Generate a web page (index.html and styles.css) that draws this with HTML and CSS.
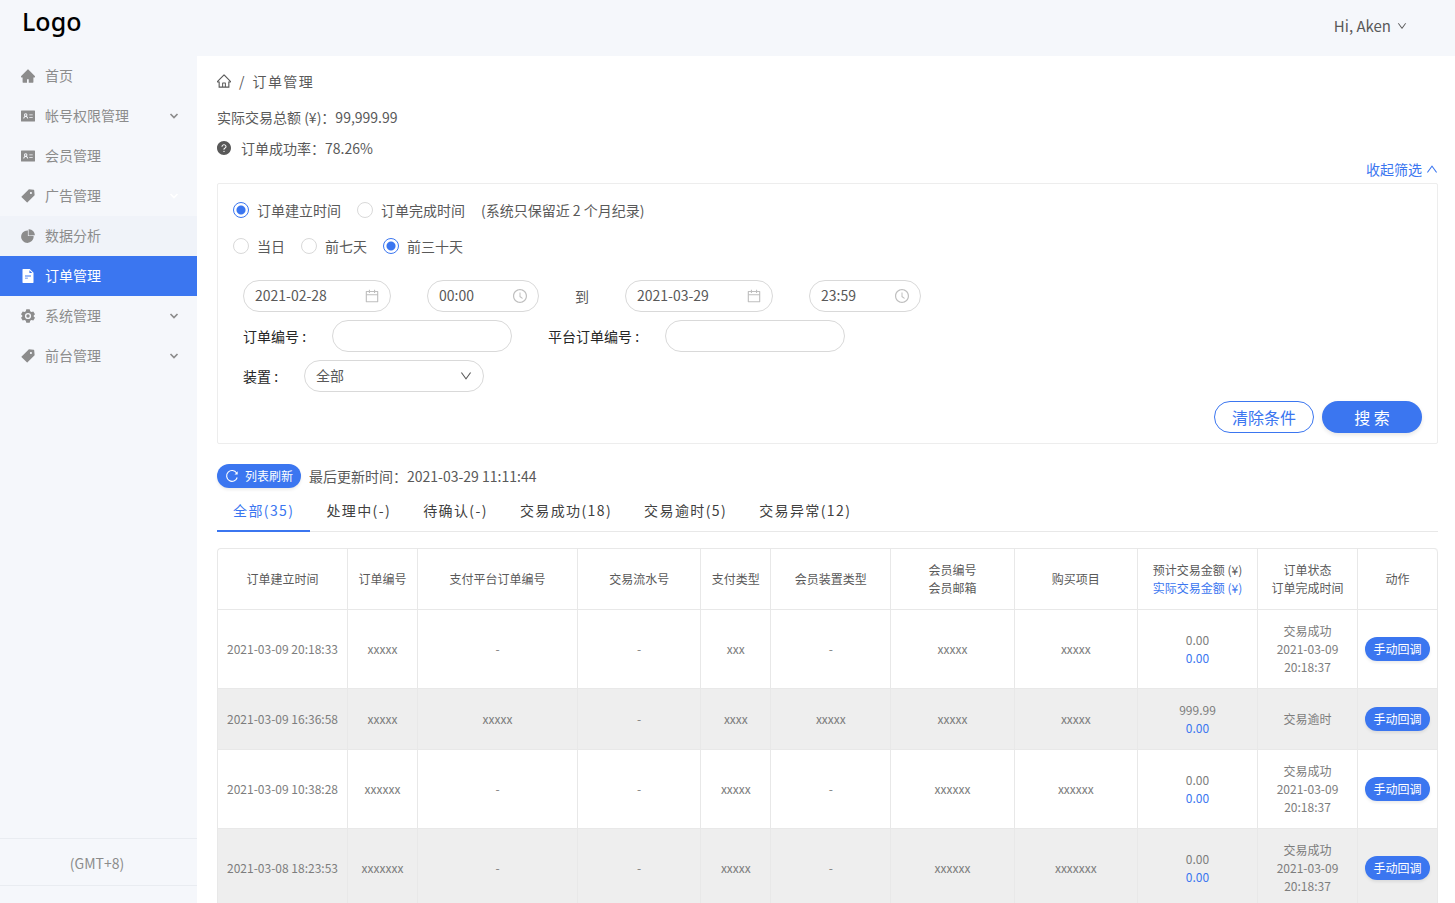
FILE: index.html
```html
<!DOCTYPE html>
<html lang="zh-CN">
<head>
<meta charset="utf-8">
<meta name="viewport" content="width=device-width, initial-scale=1">
<title>订单管理</title>
<link rel="stylesheet" href="styles.css">
</head>
<body>
<svg class="sprite" aria-hidden="true">
  <symbol id="home-fill" viewBox="64 64 896 896"><path d="M946.5 505L534.6 93.4a31.93 31.93 0 00-45.2 0L77.5 505c-12 12-18.8 28.3-18.8 45.3 0 35.3 28.7 64 64 64h43.4V908c0 17.7 14.3 32 32 32H448V716h112v224h265.9c17.7 0 32-14.3 32-32V614.3h43.4c17 0 33.3-6.7 45.3-18.8 24.9-25 24.9-65.5-.1-90.5z"/></symbol>
  <symbol id="home" viewBox="64 64 896 896"><path d="M946.5 505L560.1 118.8l-25.9-25.9a31.5 31.5 0 00-44.4 0L77.5 505a63.9 63.9 0 00-18.8 46c.4 35.2 29.7 63.3 64.9 63.3h42.5V940h691.8V614.3h43.4c17.1 0 33.2-6.7 45.3-18.8a63.6 63.6 0 0018.7-45.3c0-17-6.7-33.1-18.8-45.2zM568 868H456V664h112v204zm217.9-325.7V868H632V640c0-22.1-17.9-40-40-40H432c-22.1 0-40 17.9-40 40v228H238.1V542.3h-96l370-369.7 23.1 23.1L882 542.3h-96.1z"/></symbol>
  <symbol id="idcard" viewBox="0 0 14 14"><path fill-rule="evenodd" d="M0.5 1.5h13q.5 0 .5.5v10q0 .5-.5.5h-13Q0 12.500 0 12V2q0-.5.5-.5zM4.700 4.300a1.700 1.700 0 0 0-1.200 2.900C2.700 7.700 2.300 8.600 2.200 9.600h1c.1-1.100.7-1.700 1.500-1.700s1.400.6 1.500 1.700h1c-.1-1-.5-1.900-1.300-2.400a1.700 1.700 0 0 0-1.200-2.900zM4.700 5.200a.8.800 0 1 1 0 1.600.8.800 0 0 1 0-1.600zM8.300 5.400v.9h3.400v-.9zM8.300 7.900v.9h3.400v-.9z"/></symbol>
  <symbol id="tag" viewBox="64 64 896 896"><path d="M938 458.8l-29.6-312.6c-1.5-16.2-14.4-29-30.6-30.6L565.2 86h-.4c-3.2 0-5.7 1-7.6 2.9L88.900 557.200a9.960 9.960 0 000 14.100l363.800 363.800c1.900 1.900 4.400 2.900 7.100 2.900s5.200-1 7.100-2.900l468.300-468.300c2-2.100 3-5 2.800-8zM699 387c-35.300 0-64-28.700-64-64s28.700-64 64-64 64 28.700 64 64-28.700 64-64 64z"/></symbol>
  <symbol id="pie" viewBox="64 64 896 896"><path d="M863.1 518.5H505.5V160.9c0-4.4-3.6-8-8-8h-26a398.57 398.57 0 00-282.5 117 397.47 397.47 0 00-85.600 127C82.600 446.200 72 498.500 72 552.500S82.600 658.700 103.400 708c20.100 47.500 48.900 90.300 85.600 127 36.700 36.700 79.400 65.500 127 85.600a396.640 396.640 0 00155.600 31.500 398.570 398.570 0 00282.500-117c36.700-36.700 65.500-79.400 85.600-127a396.640 396.640 0 0031.500-155.600v-26c-.1-4.400-3.700-8-8.100-8zM951 463l-2.600-28.200c-8.500-92-49.300-178.800-115.100-244.300A398.500 398.500 0 00588.400 75.600L560.100 73c-4.700-.4-8.700 3.200-8.700 7.900v383.700c0 4.400 3.600 8 8 8l383.600-1c4.700-.1 8.400-4 8-8.600z"/></symbol>
  <symbol id="file" viewBox="64 64 896 896"><path fill-rule="evenodd" d="M854.6 288.7c6 6 9.4 14.1 9.4 22.6V928c0 17.7-14.3 32-32 32H192c-17.7 0-32-14.3-32-32V96c0-17.7 14.3-32 32-32h424.7c8.5 0 16.7 3.4 22.7 9.400l215.200 215.300zM790.200 326L602 137.800V326h188.200zM320 482v56h384v-56zM320 618v56h184v-56z"/></symbol>
  <symbol id="gear" viewBox="0 0 14 14"><path fill-rule="evenodd" d="M5.300.3h3.400l.5 1.900 1.200.7 1.900-.5L14 5.300l-1.300 1.100v1.200L14 8.700l-1.700 2.900-1.900-.5-1.200.7-.5 1.900H5.300l-.5-1.900-1.200-.7-1.900.5L0 8.700l1.300-1.100V6.400L0 5.300l1.700-2.900 1.900.5 1.200-.7zM7 3.900a3.100 3.100 0 1 0 0 6.200 3.100 3.100 0 0 0 0-6.200z"/><circle cx="7" cy="7" r="1.700"/></symbol>
  <symbol id="question" viewBox="64 64 896 896"><path d="M512 64C264.6 64 64 264.6 64 512s200.6 448 448 448 448-200.6 448-448S759.4 64 512 64zm0 708c-22.1 0-40-17.9-40-40s17.9-40 40-40 40 17.9 40 40-17.9 40-40 40zm62.9-219.5a48.3 48.3 0 00-30.9 44.8V620c0 4.4-3.6 8-8 8h-48c-4.4 0-8-3.6-8-8v-21.5c0-23.1 6.7-45.9 19.9-64.9 12.9-18.6 30.9-32.8 52.1-40.9 34-13.1 56-41.6 56-72.7 0-44.1-43.1-80-96-80s-96 35.9-96 80v7.6c0 4.4-3.6 8-8 8h-48c-4.400 0-8-3.600-8-8V420c0-39.300 17.200-76 48.400-103.300C430.400 290.400 470 276 512 276s81.600 14.500 111.600 40.700C654.800 344 672 380.700 672 420c0 57.800-38.100 109.800-97.100 132.500z" stroke="currentColor" stroke-width="0"/></symbol>
  <symbol id="calendar" viewBox="64 64 896 896"><path d="M880 184H712v-64c0-4.4-3.6-8-8-8h-56c-4.4 0-8 3.6-8 8v64H384v-64c0-4.4-3.6-8-8-8h-56c-4.4 0-8 3.6-8 8v64H144c-17.7 0-32 14.3-32 32v664c0 17.7 14.3 32 32 32h736c17.7 0 32-14.3 32-32V216c0-17.7-14.3-32-32-32zm-40 656H184V460h656v380zM184 392V256h128v48c0 4.4 3.6 8 8 8h56c4.4 0 8-3.6 8-8v-48h256v48c0 4.4 3.6 8 8 8h56c4.4 0 8-3.6 8-8v-48h128v136H184z"/></symbol>
  <symbol id="clock" viewBox="64 64 896 896"><path d="M512 64C264.6 64 64 264.6 64 512s200.6 448 448 448 448-200.6 448-448S759.4 64 512 64zm0 820c-205.4 0-372-166.6-372-372s166.6-372 372-372 372 166.6 372 372-166.6 372-372 372z"/><path d="M686.7 638.6L544.1 535.5V288c0-4.4-3.6-8-8-8H488c-4.4 0-8 3.6-8 8v275.4c0 2.6 1.2 5 3.3 6.5l165.4 120.6c3.6 2.6 8.6 1.8 11.2-1.7l28.6-39c2.6-3.7 1.8-8.7-1.8-11.2z"/></symbol>
  <symbol id="down" viewBox="64 64 896 896"><path d="M884 256h-75c-5.1 0-9.9 2.5-12.9 6.6L512 654.2 227.9 262.6c-3-4.1-7.8-6.6-12.9-6.6h-75c-6.5 0-10.3 7.4-6.5 12.7l352.6 486.1c12.8 17.6 39 17.6 51.7 0l352.6-486.1c3.9-5.3.1-12.7-6.4-12.7z"/></symbol>
  <symbol id="chevron" viewBox="0 0 10 10"><path d="M1.500 3L5 6.500 8.500 3" fill="none" stroke="currentColor" stroke-width="1.700"/></symbol>
  <symbol id="reload" viewBox="0 0 14 14"><path d="M11.600 4A5.400 5.400 0 1 0 12.200 8.500" fill="none" stroke="currentColor" stroke-width="1.100"/><path d="M12.700 2.200v3.300H9.500z"/></symbol>
</svg>
<div class="app">
  <header class="topbar">
    <a class="logo" href="#">Logo</a>
    <button class="user" type="button">Hi, Aken <svg class="icon icon-xs"><use href="#down"/></svg></button>
  </header>
  <div class="body">
    <aside class="sidebar">
      <nav class="menu">
        <a class="menu-item" href="#"><svg class="icon"><use href="#home-fill"/></svg><span>首页</span></a>
        <a class="menu-item" href="#"><svg class="icon"><use href="#idcard"/></svg><span>帐号权限管理</span><svg class="icon arrow"><use href="#chevron"/></svg></a>
        <a class="menu-item" href="#"><svg class="icon"><use href="#idcard"/></svg><span>会员管理</span></a>
        <a class="menu-item" href="#"><svg class="icon"><use href="#tag"/></svg><span>广告管理</span><svg class="icon arrow arrow-light"><use href="#chevron"/></svg></a>
        <a class="menu-item is-hover" href="#"><svg class="icon"><use href="#pie"/></svg><span>数据分析</span></a>
        <a class="menu-item is-active" href="#" aria-current="page"><svg class="icon"><use href="#file"/></svg><span>订单管理</span></a>
        <a class="menu-item" href="#"><svg class="icon"><use href="#gear"/></svg><span>系统管理</span><svg class="icon arrow"><use href="#chevron"/></svg></a>
        <a class="menu-item" href="#"><svg class="icon"><use href="#tag"/></svg><span>前台管理</span><svg class="icon arrow"><use href="#chevron"/></svg></a>
      </nav>
      <div class="timezone">(GMT+8)</div>
    </aside>
    <main class="main">
      <nav class="breadcrumb" aria-label="breadcrumb">
        <a href="#" aria-label="首页"><svg class="icon"><use href="#home"/></svg></a><span>/</span><span class="crumb">订单管理</span>
      </nav>
      <p class="stat">实际交易总额 (¥)：99,999.99</p>
      <p class="stat"><svg class="icon"><use href="#question"/></svg>订单成功率：78.26%</p>
      <button class="collapse" type="button">收起筛选 <svg class="icon icon-sm flip"><use href="#down"/></svg></button>

      <form class="filter">
        <div class="radios">
          <label><input type="radio" name="kind" checked>订单建立时间</label>
          <label><input type="radio" name="kind">订单完成时间</label>
          <span>(系统只保留近 2 个月纪录)</span>
        </div>
        <div class="radios">
          <label><input type="radio" name="range">当日</label>
          <label><input type="radio" name="range">前七天</label>
          <label><input type="radio" name="range" checked>前三十天</label>
        </div>
        <div class="fields">
          <div class="field-row">
            <label class="picker picker-date"><input type="text" value="2021-02-28" aria-label="开始日期"><svg class="icon"><use href="#calendar"/></svg></label>
            <label class="picker picker-time"><input type="text" value="00:00" aria-label="开始时间"><svg class="icon"><use href="#clock"/></svg></label>
            <span>到</span>
            <label class="picker picker-date"><input type="text" value="2021-03-29" aria-label="结束日期"><svg class="icon"><use href="#calendar"/></svg></label>
            <label class="picker picker-time"><input type="text" value="23:59" aria-label="结束时间"><svg class="icon"><use href="#clock"/></svg></label>
          </div>
          <div class="field-row">
            <div class="field"><label for="order">订单编号 :</label><input class="box" id="order" type="text"></div>
            <div class="field"><label for="platform">平台订单编号 :</label><input class="box" id="platform" type="text"></div>
          </div>
          <div class="field-row">
            <div class="field"><label for="device">装置 :</label>
              <div class="select"><select class="box" id="device"><option>全部</option></select><svg class="icon icon-sm"><use href="#down"/></svg></div>
            </div>
          </div>
        </div>
        <div class="actions">
          <button class="btn btn-outline" type="reset">清除条件</button>
          <button class="btn btn-primary" type="submit">搜 索</button>
        </div>
      </form>

      <div class="refresh">
        <button class="btn-small" type="button"><svg class="icon"><use href="#reload"/></svg>列表刷新</button>
        <span>最后更新时间：2021-03-29 11:11:44</span>
      </div>
      <div class="tabs" role="tablist">
        <button class="tab is-active" type="button" role="tab" aria-selected="true">全部(35)</button>
        <button class="tab" type="button" role="tab">处理中(-)</button>
        <button class="tab" type="button" role="tab">待确认(-)</button>
        <button class="tab" type="button" role="tab">交易成功(18)</button>
        <button class="tab" type="button" role="tab">交易逾时(5)</button>
        <button class="tab" type="button" role="tab">交易异常(12)</button>
      </div>
      <table class="orders">
        <colgroup><col class="w130"><col class="w70"><col class="w160"><col><col class="w70"><col class="w120"><col><col><col class="w120"><col class="w100"><col class="w80"></colgroup>
        <thead>
          <tr><th>订单建立时间</th><th>订单编号</th><th>支付平台订单编号</th><th>交易流水号</th><th>支付类型</th><th>会员装置类型</th><th>会员编号<br>会员邮箱</th><th>购买项目</th><th>预计交易金额 (¥)<br><span class="actual">实际交易金额 (¥)</span></th><th>订单状态<br>订单完成时间</th><th>动作</th></tr>
        </thead>
        <tbody>
          <tr><td>2021-03-09 20:18:33</td><td>xxxxx</td><td>-</td><td>-</td><td>xxx</td><td>-</td><td>xxxxx</td><td>xxxxx</td><td>0.00<br><span class="actual">0.00</span></td><td>交易成功<br>2021-03-09<br>20:18:37</td><td><button class="btn-small" type="button">手动回调</button></td></tr>
          <tr><td>2021-03-09 16:36:58</td><td>xxxxx</td><td>xxxxx</td><td>-</td><td>xxxx</td><td>xxxxx</td><td>xxxxx</td><td>xxxxx</td><td>999.99<br><span class="actual">0.00</span></td><td>交易逾时</td><td><button class="btn-small" type="button">手动回调</button></td></tr>
          <tr><td>2021-03-09 10:38:28</td><td>xxxxxx</td><td>-</td><td>-</td><td>xxxxx</td><td>-</td><td>xxxxxx</td><td>xxxxxx</td><td>0.00<br><span class="actual">0.00</span></td><td>交易成功<br>2021-03-09<br>20:18:37</td><td><button class="btn-small" type="button">手动回调</button></td></tr>
          <tr><td>2021-03-08 18:23:53</td><td>xxxxxxx</td><td>-</td><td>-</td><td>xxxxx</td><td>-</td><td>xxxxxx</td><td>xxxxxxx</td><td>0.00<br><span class="actual">0.00</span></td><td>交易成功<br>2021-03-09<br>20:18:37</td><td><button class="btn-small" type="button">手动回调</button></td></tr>
        </tbody>
      </table>
    </main>
  </div>
</div>
</body>
</html>
```
FILE: styles.css
```css
:root {
  --blue: #3b76f0;
  --side: #f5f7fb;
  --line: #e8e8e8;
  --text: #595959;
}
* { box-sizing: border-box; }
body {
  margin: 0;
  font: 400 14px/22px "Noto Sans CJK SC", sans-serif;
  color: var(--text);
  background: #fff;
}
button, input, select { font: inherit; color: inherit; }
button { border: 0; background: none; padding: 0; cursor: pointer; }
a { color: inherit; text-decoration: none; }
p { margin: 0; }
.sprite { display: none; }
.icon { width: 14px; height: 14px; flex: none; fill: currentColor; display: block; }
.icon-sm { width: 12px; height: 12px; }
.icon-xs { width: 10px; height: 10px; }
.flip { transform: rotate(180deg); }

.app { height: 100vh; display: flex; flex-direction: column; }
.topbar {
  flex: none;
  height: 56px;
  padding: 0 48px 0 22px;
  display: flex;
  justify-content: space-between;
  background: var(--side);
}
.logo { font: 500 25px/42px "Noto Sans", "Open Sans", sans-serif; color: #000; }
.user { display: flex; align-items: center; align-self: flex-start; gap: 6px; font-size: 15px; line-height: 52px; }
.body { flex: 1; min-height: 0; display: flex; }

.sidebar {
  flex: none;
  width: 197px;
  padding-bottom: 17px;
  display: flex;
  flex-direction: column;
  justify-content: space-between;
  background: var(--side);
  color: #8c8c8c;
}
.menu-item { height: 40px; padding: 0 18px 0 21px; display: flex; align-items: center; gap: 10px; }
.menu-item span { padding-bottom: 2px; }
.arrow { width: 10px; height: 10px; margin-left: auto; }
.arrow-light { color: #fff; }
.is-hover { background: #f0f3f9; }
.menu-item.is-active { background: var(--blue); color: #fff; }
.timezone {
  border: solid #e9ecf1;
  border-width: 1px 0;
  padding: 13px 3px 11px 0;
  text-align: center;
}

.main { flex: 1; min-width: 0; padding: 14px 17px 24px 20px; overflow-y: auto; scrollbar-width: none; }
.breadcrumb { display: flex; align-items: center; gap: 8px; margin-bottom: 14px; }
.crumb { letter-spacing: 0.1em; }
.stat { display: flex; align-items: center; gap: 10px; margin-bottom: 9px; }
.collapse { display: flex; align-items: center; gap: 4px; margin: -10px 0 3px auto; color: var(--blue); }

.filter { border: 1px solid #ededed; border-radius: 2px; padding: 15px 15px 10px; }
.radios { display: flex; gap: 16px; margin-bottom: 14px; }
.radios label { display: flex; align-items: center; gap: 8px; }
.radios input {
  appearance: none;
  width: 16px;
  height: 16px;
  margin: 0;
  border: 1px solid #d9d9d9;
  border-radius: 50%;
  background: #fff;
}
.radios input:checked { border-color: var(--blue); background: radial-gradient(circle, var(--blue) 4px, #fff 5px); }
.fields { display: flex; flex-direction: column; gap: 8px; padding: 9px 10px; }
.field-row { display: flex; align-items: center; gap: 36px; }
.picker, .box { height: 32px; border: 1px solid #d9d9d9; border-radius: 16px; background: #fff; }
.picker { display: flex; align-items: center; padding: 0 11px; }
.picker input { flex: 1; min-width: 0; width: 0; border: 0; padding: 0 0 2px; outline: 0; background: none; }
.picker .icon { color: #bfbfbf; }
.picker-date { width: 148px; }
.picker-time { width: 112px; }
.field { display: flex; align-items: center; gap: 26px; color: #262626; }
.box { width: 180px; padding: 0 11px 2px; }
.select { display: grid; align-items: center; color: var(--text); }
.select > * { grid-area: 1 / 1; }
.select select { appearance: none; }
.select .icon { justify-self: end; margin-right: 12px; pointer-events: none; }
.actions { display: flex; justify-content: flex-end; gap: 8px; }
.btn { width: 100px; height: 32px; border-radius: 16px; font-size: 16px; line-height: 30px; }
.btn-outline { border: 1px solid var(--blue); color: var(--blue); background: #fff; }
.btn-primary { background: var(--blue); color: #fff; box-shadow: 0 2px 4px rgba(0, 0, 0, 0.1); }
.btn-small {
  display: inline-flex;
  align-items: center;
  gap: 6px;
  height: 24px;
  padding: 0 8px;
  border-radius: 12px;
  background: var(--blue);
  color: #fff;
  font-size: 12px;
  line-height: 24px;
  white-space: nowrap;
  vertical-align: middle;
  box-shadow: 0 2px 3px rgba(0, 0, 0, 0.08);
}

.refresh { display: flex; align-items: center; gap: 8px; margin-top: 20px; }
.tabs { display: flex; border-bottom: 1px solid var(--line); margin-bottom: 16px; }
.tab {
  height: 44px;
  margin-bottom: -1px;
  padding: 2px 16px 0;
  border-bottom: 2px solid transparent;
  letter-spacing: 0.1em;
  color: #404040;
}
.tab.is-active { color: var(--blue); border-color: var(--blue); }

.orders {
  width: 100%;
  table-layout: fixed;
  border-collapse: separate;
  border-spacing: 0;
  border: solid var(--line);
  border-width: 1px 0 0 1px;
  border-radius: 4px 4px 0 0;
  font-size: 12px;
  line-height: 18px;
  text-align: center;
}
.orders th, .orders td { padding: 12px 7px; border: solid var(--line); border-width: 0 1px 1px 0; font-weight: inherit; }
.orders th:last-child { border-top-right-radius: 4px; }
.orders td { color: #7d7d7d; }
.orders tbody tr:nth-child(even) { background: #eee; }
.orders .actual { color: var(--blue); }
.w70 { width: 70px; }
.w80 { width: 80px; }
.w100 { width: 100px; }
.w120 { width: 120px; }
.w130 { width: 130px; }
.w160 { width: 160px; }
```
